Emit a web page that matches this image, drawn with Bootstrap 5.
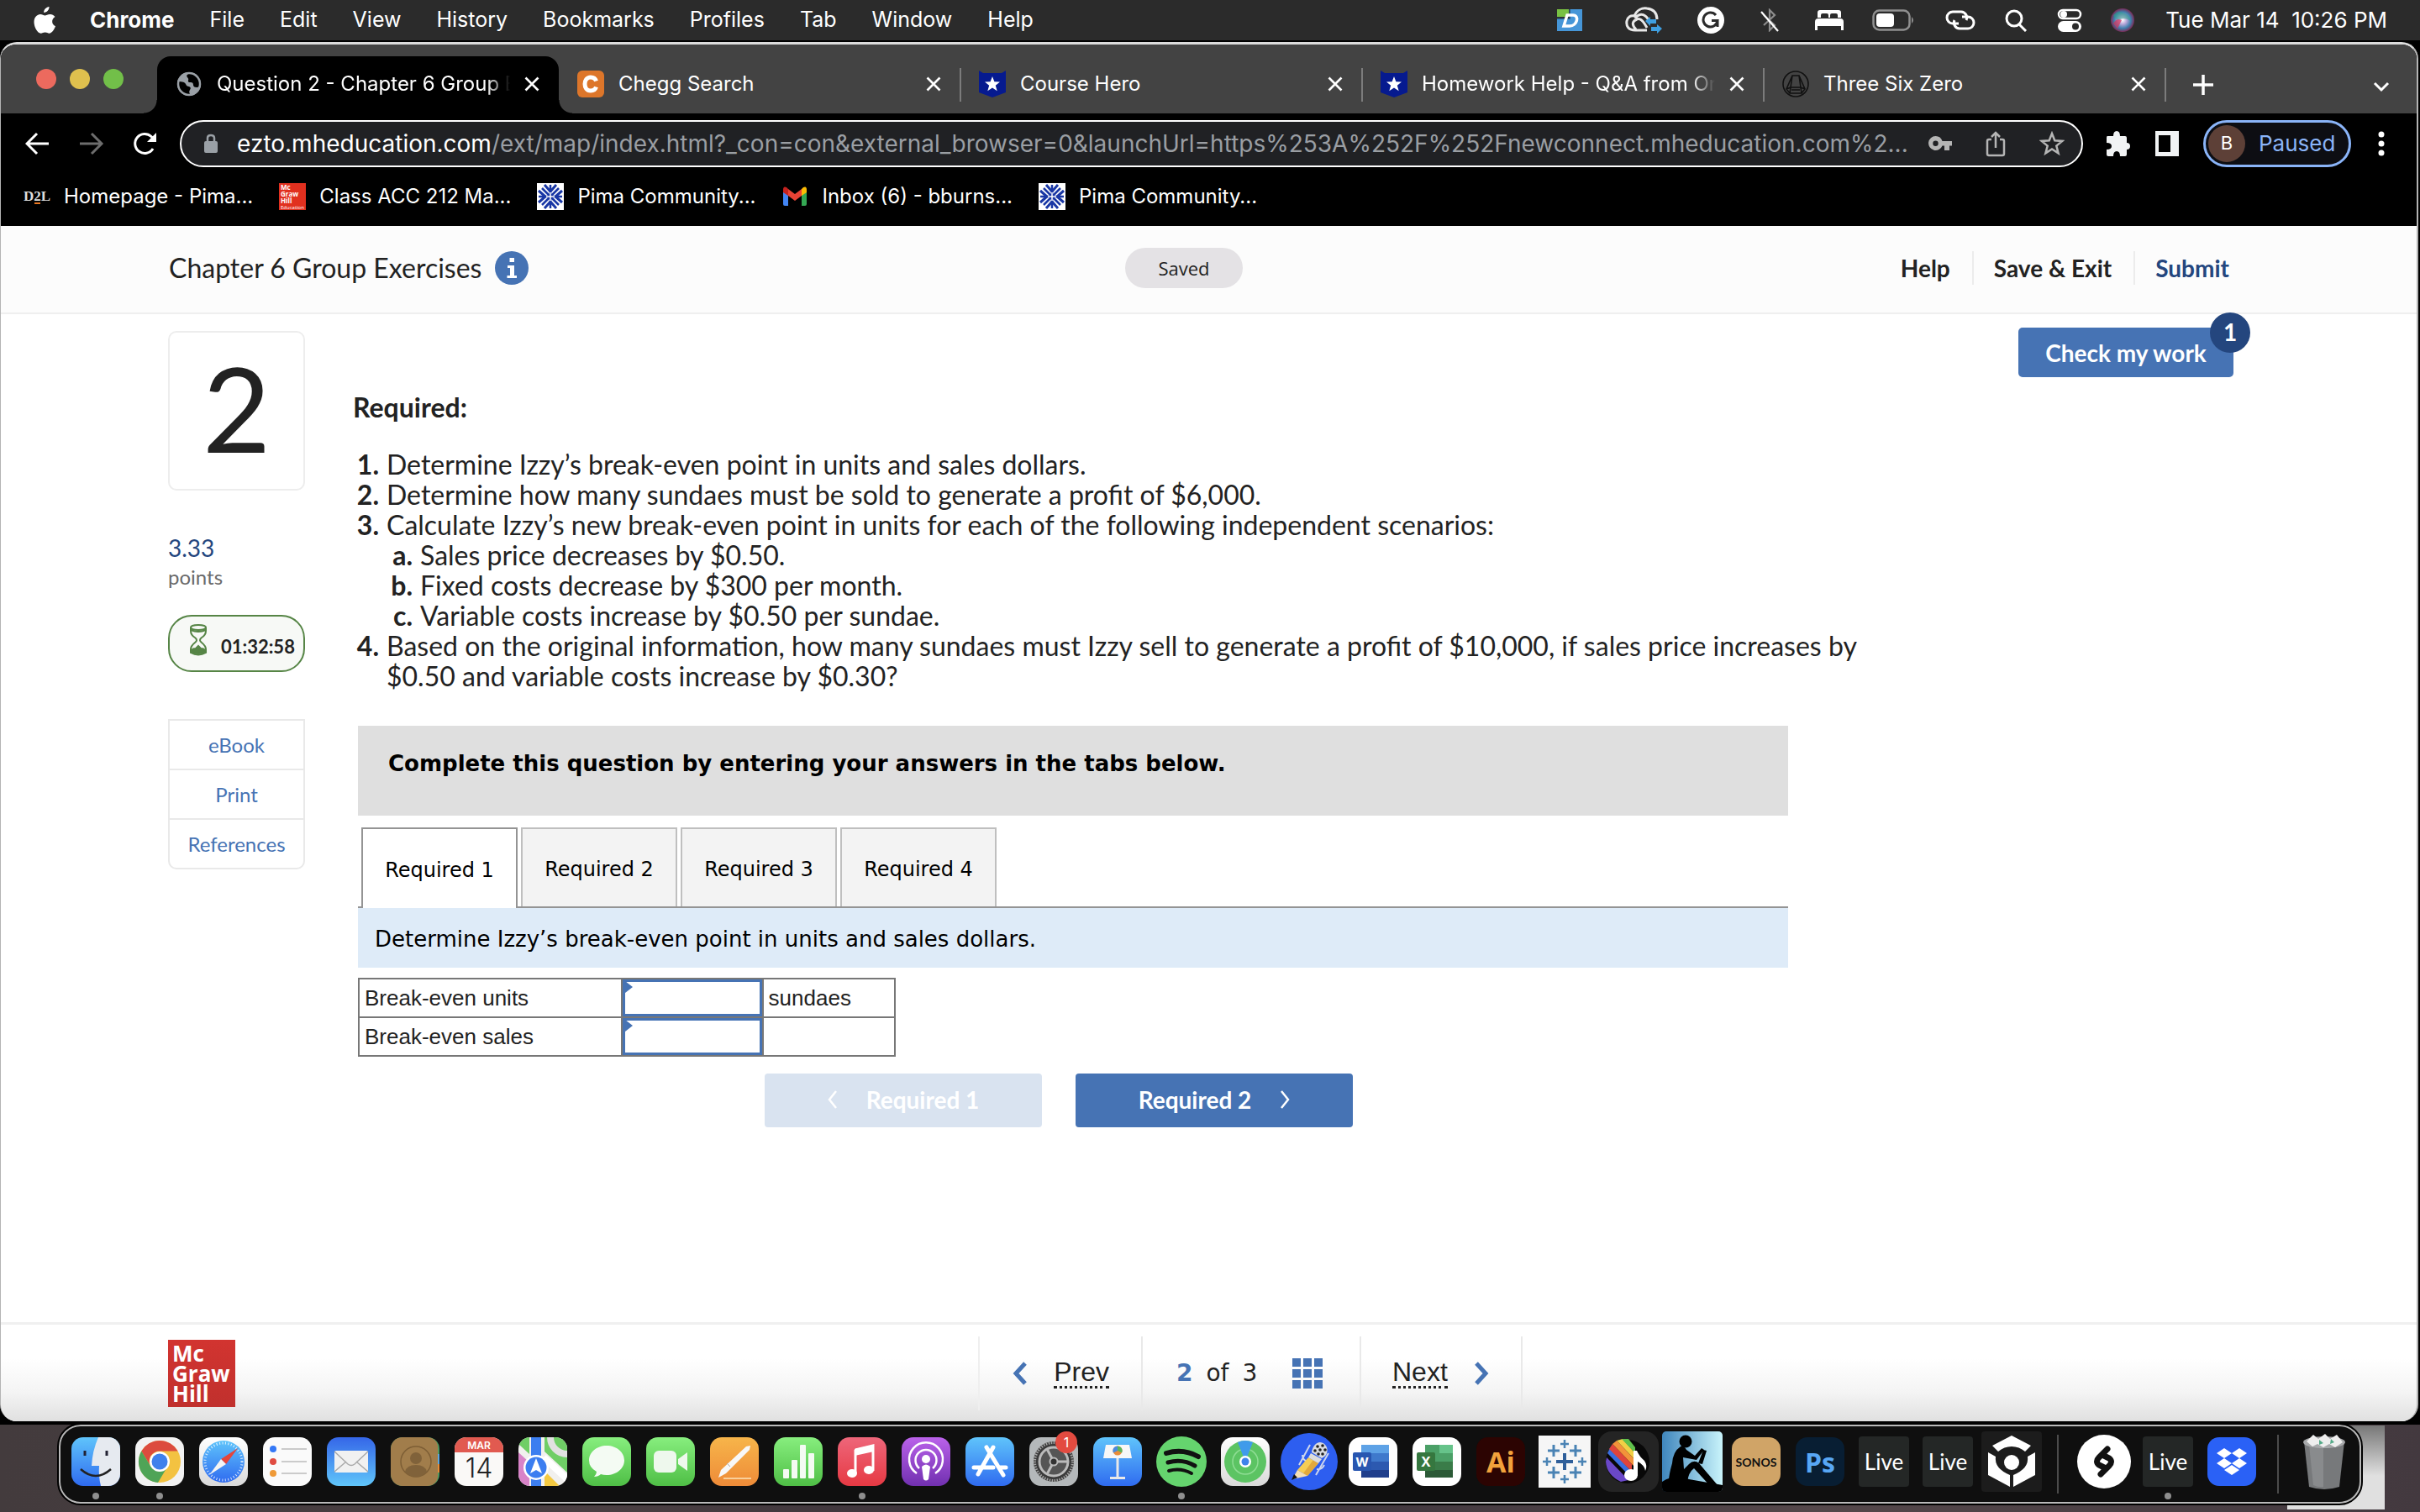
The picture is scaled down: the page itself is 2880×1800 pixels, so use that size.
<!DOCTYPE html>
<html lang="en">
<head>
<meta charset="utf-8">
<meta name="viewport" content="width=device-width, initial-scale=1">
<title>Question 2 - Chapter 6 Group Exercises</title>
<link href="https://cdn.jsdelivr.net/npm/bootstrap@5.3.0/dist/css/bootstrap.min.css" rel="stylesheet">
<script src="https://cdn.jsdelivr.net/npm/bootstrap@5.3.0/dist/js/bootstrap.bundle.min.js"></script>
<style>
:root{--ui:Inter,sans-serif;--text:Lato,sans-serif;--wide:"DejaVu Sans",sans-serif;--plain:"Liberation Sans",sans-serif;--mhblue:#4673b4;--navy:#24467e;--ink:#222}
body{background:#000;font-family:var(--ui);line-height:1.25;overflow:hidden;color:var(--ink)}
a{text-decoration:none;color:inherit}
button{border:0;background:none;padding:0;color:inherit}
svg{display:block;flex:none}
.desk{min-height:100vh;background:linear-gradient(90deg,#433b3d,#4a3f42 25%,#372f38 45%,#54474a 75%,#43393f)}
/* system menu bar */
.sysbar{height:48px;background:#2b2b2b;color:#fff;font-size:26px;padding:0 39px 0 40px}
.sysmenu{font-size:25px;gap:42px;margin-left:40px}
.sysmenu b{font-size:26px;font-weight:700}
.sysicons{margin-right:37px;gap:34px}
.clock{white-space:pre}
/* browser window */
.edge{background:#000;padding:2px 2px 4px 0}
.win{background:#000;border:2px solid #b4b4b4;border-top:3px solid #dcdcdc;border-left-width:1px;border-bottom:0;border-radius:20px;overflow:hidden}
.strip{height:82px;background:#434343;color:#fff;font-size:24px;padding-left:42px}
.lights{gap:16px;width:144px}
.lights button{width:24px;height:24px;border-radius:50%}
.wtab{width:478px;height:68px;padding:0 23px 2px 22px;position:relative;gap:17px}
.wtab .wt{flex:1;overflow:hidden;white-space:nowrap;min-width:0}
.fade-end{-webkit-mask-image:linear-gradient(90deg,#000 92%,transparent);mask-image:linear-gradient(90deg,#000 92%,transparent)}
.wtab+.wtab+.wtab::before,.plus::before{content:"";position:absolute;left:-1px;top:14px;width:2px;height:40px;background:#7c7c7c}
.wtab.on{background:#000;border-radius:16px 16px 0 0}
.wtab.on::before,.wtab.on::after{content:"";position:absolute;bottom:0;width:16px;height:16px}
.wtab.on::before{left:-16px;background:radial-gradient(circle at 0 0,#434343 15px,#000 16px)}
.wtab.on::after{right:-16px;background:radial-gradient(circle at 100% 0,#434343 15px,#000 16px)}
.plus{height:68px;width:89px;position:relative}
.tools{height:72px;padding:0 38px 0 29px;color:#fff}
.fwd{margin:0 34px 0 34px}
.omni{height:56px;border:2px solid #fff;border-radius:28px;background:#202124;font-size:28px;color:#9a9ea3;padding:0 20px 0 26px;margin:0 25px 0 26px;min-width:0}
.omni .url{white-space:nowrap;overflow:hidden;min-width:0;outline:0;margin-left:22px}
.omni .url b{font-weight:400;color:#fff}
.paused{height:56px;width:176px;border:3px solid #8ab4f8;border-radius:28px;background:#0d0e13;color:#8ab4f8;font-size:26px;padding-left:3px}
.avatar{width:44px;height:44px;border-radius:50%;background:#5d4037;color:#fff;font-size:22px;display:flex;align-items:center;justify-content:center}
.marks{height:62px;padding:0 27px 8px;gap:31px;color:#fff;font-size:24px}
.marks a{gap:16px}
/* exercise page */
.page{background:#fff;font-family:var(--text);font-size:32px}
.phead{height:105px;background:#fcfcfc;border-bottom:2px solid #efefef;padding:0 223px 4px 200px}
.phead>div{flex:1 1 0}
.saved{font:22px/48px "Open Sans",sans-serif;width:140px;border-radius:24px;background:#e4e2e5;text-align:center;margin-right:36px}
.pnav{font-size:28px;font-weight:700;line-height:40px}
.pnav a+a{border-left:2px solid #ececec;margin-left:26px;padding-left:24px}
.pmain{padding:20px 218px 0 199px}
.side{width:163px}
.qnum{height:190px;border:2px solid #ededed;border-radius:10px;font-size:140px;line-height:178px;text-align:center}
.pts{font-size:28px;line-height:36px;color:var(--navy);margin-top:50px}
.ptl{font-size:24px;line-height:34px;color:#6a6a6a}
.timer{height:68px;border:2px solid #568546;border-radius:28px;background:#f7f9f6;margin-top:28px;font-size:22px;font-weight:700;gap:15px;padding-left:22px}
.reflinks{border:2px solid #e9e9e9;border-radius:0 0 10px 10px;margin-top:56px;font-size:24px;color:var(--mhblue);text-align:center}
.reflinks a{display:block;line-height:57px}
.reflinks a+a{border-top:2px solid #e9e9e9}
.quest{margin-left:57px;padding-top:71px;width:1800px}
.quest h2{font-size:32px;font-weight:700;line-height:40px;margin-bottom:30px}
.quest ol{line-height:36px;margin:0 0 41px;padding-left:40px;list-style:none;counter-reset:n}
.quest ol ol{margin:0}
.quest li{counter-increment:n;position:relative}
.quest li::before{content:counter(n) ".";position:absolute;right:100%;margin-right:9px;font-weight:700;text-align:right}
.quest ol ol li::before{content:counter(n,lower-alpha) "."}
.work{margin-left:6px;width:1702px}
.banner{height:107px;background:#dfdfdf;color:#000;font:700 26px/90px var(--wide);padding-left:36px}
.qtabs{gap:4px;margin-top:14px;padding-left:4px;border-bottom:2px solid #949494;color:#000}
.qtabs button{width:186px;height:94px;border:2px solid #bfbfbf;border-bottom:0;background:#f3f3f3;font:24px var(--wide);padding-top:4px}
.qtabs button.on{background:#fff;border-color:#949494;margin-bottom:-2px;height:96px}
.prompt{height:71px;background:#deebf8;color:#000;font:26px/74px var(--wide);padding-left:20px}
.answers{margin-top:12px;border-collapse:collapse;font:26px/30px var(--plain);width:640px}
.answers th,.answers td{border:2px solid #777;height:46px;padding:0 6px;font-weight:400}
.answers td.cell{padding:0;width:168px;position:relative}
.answers input{display:block;width:100%;height:44px;border:3px solid var(--mhblue);border-radius:0;outline:0;padding:0 8px}
.answers td.cell::after{content:"";position:absolute;left:3px;top:2px;border-left:9px solid var(--mhblue);border-top:7px solid transparent;border-bottom:7px solid transparent}
.stepper{gap:40px;margin:20px 0 0 484px}
.stepper button{width:330px;height:64px;border-radius:4px;background:var(--mhblue);color:#fff;font-size:28px;font-weight:700;gap:34px;padding-bottom:2px}
.stepper button:disabled{background:#d9e3f0}
.check{background:var(--mhblue);color:#fff;border-radius:5px;width:256px;height:59px;font-size:28px;font-weight:700;position:relative;margin-top:-4px;line-height:54px}
.check span{position:absolute;right:-20px;top:-18px;width:48px;height:48px;border-radius:50%;background:var(--navy);line-height:46px;text-align:center}
.pfoot{height:118px;border-top:3px solid #f0f0f0;padding:0 100px 0 199px;background:linear-gradient(#fff 35%,#f4f4f4 70%,#e0e0e0)}
.pfoot>div{flex:1 1 0}
.mhlogo{width:80px;height:80px;background:linear-gradient(#d23430,#c0302d);color:#fff;font:700 26px/24px "Open Sans",sans-serif;padding:4px 0 0 5px}
.pager{font:32px/40px var(--plain);flex:none!important}
.pager>*{height:88px;border-right:2px solid #e9e9e9}
.pager>:first-child{border-left:2px solid #efefef;padding:0 38px;gap:30px}
.pager>:nth-child(2){font-family:var(--wide);font-size:28px;width:260px;padding-left:40px;gap:16px}
.pager>:nth-child(3){padding:0 37px;gap:30px}
.pager u{text-decoration:none;border-bottom:3px dotted #222;line-height:34px}
/* dock */
.shelf{height:104px;position:relative}
.peek{position:absolute;right:42px;top:1px;width:116px;height:100px;background:linear-gradient(#777,#e0e0e0 60%)}
.dock{position:relative;height:94px;border:2px solid #b9b9b9;border-radius:26px;background:#0f0f0f;padding:0 4px;outline:2px solid #000}
.dock>a{width:76px;height:90px;display:flex;align-items:center;justify-content:center;position:relative;padding-bottom:6px}
.dock>a.run::after{content:"";position:absolute;bottom:3px;left:34px;width:8px;height:8px;border-radius:50%;background:#8f8f8f}
.dock>i{width:2px;height:70px;background:#4b4b4b;margin:0 16px}
.tile{width:58px;height:58px;border-radius:14px;display:flex;align-items:center;justify-content:center;overflow:hidden}
.live{width:60px;height:60px;border-radius:4px;background:#242726;color:#fff;font:26px Lato,sans-serif}
.ai{background:#2c0402;color:#f2a23c;font:700 34px "Open Sans",sans-serif}
.ps{background:#081e33;color:#58a7f5;font:700 32px "Open Sans",sans-serif}
.sonos{background:#d0a467;color:#111;font:700 14px Lato,sans-serif}
.dropb{background:#2a61f6}
.count{position:absolute;right:10px;top:6px;width:26px;height:26px;border-radius:50%;background:#e34b40;color:#fff;font-size:16px;line-height:26px;text-align:center}
</style>
</head>
<body>
<svg width="0" height="0" class="position-absolute">
<defs>
<symbol id="x" viewBox="0 0 18 18"><path d="M1.500 1.500l15 15M16.500 1.500l-15 15" stroke="#fff" stroke-width="2.600"/></symbol>
<symbol id="hero" viewBox="0 0 32 32"><path d="M0 0l5 3h22l5-3v26L16 32 0 26z" fill="#061a8f"/><path d="M16 7l2.400 6.300 6.600.2-5.200 4.200 1.900 6.500L16 20.500l-5.700 3.700 1.900-6.500L7 13.500l6.600-.2z" fill="#fff"/></symbol>
<symbol id="pima" viewBox="0 0 32 32"><path d="M0 0h32v32H0z" fill="#fff"/><g fill="none" stroke="#1937a5"><path d="M16 2v28M2 16h28M6 6l20 20M26 6L6 26" stroke-width="2.500"/><path d="M9 2l7 8 7-8M9 30l7-8 7 8M2 9l8 7-8 7M30 9l-8 7 8 7" stroke-width="3"/></g><path d="M16 11v10M11 16h10" stroke="#fff" stroke-width="1.500"/></symbol>
<linearGradient id="gBlue" x2="0" y2="1"><stop stop-color="#5fc4fb"/><stop offset="1" stop-color="#2f6bf0"/></linearGradient>
<linearGradient id="gBlueR" x2="0" y2="1"><stop stop-color="#3566e8"/><stop offset="1" stop-color="#60c6fa"/></linearGradient>
<linearGradient id="gGreen" x2="0" y2="1"><stop stop-color="#87ee7e"/><stop offset="1" stop-color="#4fbf46"/></linearGradient>
<linearGradient id="gWhite" x2="0" y2="1"><stop stop-color="#fff"/><stop offset="1" stop-color="#d9d9d9"/></linearGradient>
<linearGradient id="gRed" x2="0" y2="1"><stop stop-color="#ee667a"/><stop offset="1" stop-color="#e63943"/></linearGradient>
<linearGradient id="gPurple" x2="0" y2="1"><stop stop-color="#ba62ea"/><stop offset="1" stop-color="#7130b0"/></linearGradient>
<linearGradient id="gOrange" x2="0" y2="1"><stop stop-color="#f7b54a"/><stop offset="1" stop-color="#ee8b38"/></linearGradient>
<linearGradient id="gSky" x2="1" y2="0"><stop stop-color="#3f86bd"/><stop offset="1" stop-color="#c9f4fb"/></linearGradient>
<radialGradient id="gSiri"><stop stop-color="#fff"/><stop offset=".35" stop-color="#b7a6d8"/><stop offset=".7" stop-color="#3f7fae"/><stop offset="1" stop-color="#7b2b57"/></radialGradient>
</defs>
</svg>

<div class="desk d-flex flex-column">
<header class="sysbar d-flex align-items-center">
  <svg width="27" height="32" viewBox="0 0 27 32" fill="#fff"><path d="M18.500 0c.3 3.500-2.800 7-6.300 6.900C11.900 3.500 15.200.300 18.500 0zM26 23.300c-1.600 4-4.300 8.300-7.300 8.400-2 0-2.700-1.200-5-1.200s-3.200 1.200-5.100 1.200C4.800 31.800.500 24.500.500 18.300c0-6 3.800-9.200 7.500-9.300 2.200 0 4.200 1.500 5.500 1.500s3.800-1.700 6.400-1.500c1.900.1 4.200 1 5.600 3-4.900 3-4.100 9.300.5 11.300z"/></svg>
  <nav class="sysmenu d-flex align-items-center"><a href="#"><b>Chrome</b></a><a href="#">File</a><a href="#">Edit</a><a href="#">View</a><a href="#">History</a><a href="#">Bookmarks</a><a href="#">Profiles</a><a href="#">Tab</a><a href="#">Window</a><a href="#">Help</a></nav>
  <div class="sysicons d-flex align-items-center ms-auto">
    <svg class="me-3" width="32" height="26" viewBox="0 0 32 26"><path d="M1 0h14v9H1z" fill="#79c143"/><path d="M16 0h15v26H1V11h15z" fill="#4696d8"/><path d="M1 11h15V0" fill="none" stroke="#2b4a66" stroke-width="1.500"/><path d="M13 7l-4 13h7c9 0 12-13 4-13z" fill="none" stroke="#fff" stroke-width="3.500"/></svg>
    <svg class="me-2" width="44" height="32" viewBox="0 0 44 32" fill="none" stroke="#e8e8e8" stroke-width="3"><path d="M26 28H12C4 28 1 23 2 17c1-5 5-7 9-6C14 4 20 1 26 2c8 1 12 6 12 13M13 27c-6-6-4-10 1-12 4-2 7 2 9 5l3 5M12 14c3-5 8-6 12-3 3 2 5 7 6 9"/><path d="M24 17l6-5v3h7v5h-7v3zM44 26l-6-5v3h-7v5h7v3z" fill="#3f9fe0" stroke="none"/></svg>
    <svg class="me-2" width="32" height="32" viewBox="0 0 32 32"><circle cx="16" cy="16" r="16" fill="#fff"/><path d="M22 10a8.500 8.500 0 1 0 2 6.500h-7M24 16.500V24" fill="none" stroke="#2b2b2b" stroke-width="3"/></svg>
    <svg class="me-2" width="24" height="28" viewBox="0 0 24 28" fill="none" stroke="#8d8d8d" stroke-width="2.200"><path d="M5 8l13 12-6 6V2l6 6L5 20"/><path d="M2 4l20 23" stroke="#fff"/></svg>
    <svg width="34" height="24" viewBox="0 0 34 24" fill="#fff"><path d="M3 9V3q0-3 3-3h22q3 0 3 3v6h-4V6q0-2-2-2h-5q-2 0-2 2v3h-2V6q0-2-2-2H9Q7 4 7 6v3zM0 24V14q0-4 4-4h26q4 0 4 4v10h-3v-5H3v5z"/></svg>
    <svg width="52" height="26" viewBox="0 0 52 26"><rect x="1.500" y="1.500" width="43" height="23" rx="7" fill="none" stroke="#909090" stroke-width="2.500"/><path d="M47 9q4 4 0 8z" fill="#909090"/><rect x="5" y="5" width="21" height="16" rx="4" fill="#fff"/></svg>
    <svg width="38" height="24" viewBox="0 0 38 24" fill="none" stroke="#fff" stroke-width="3"><path d="M17 16h-7a7 7 0 0 1 0-14h10a7 7 0 0 1 6 10M21 8h7a7 7 0 0 1 0 14H18a7 7 0 0 1-6-10"/></svg>
    <svg width="28" height="28" viewBox="0 0 28 28" fill="none" stroke="#fff" stroke-width="3"><circle cx="11" cy="12" r="9"/><path d="M17 19l8 8"/></svg>
    <svg width="30" height="28" viewBox="0 0 30 28"><rect x="2" y="2" width="26" height="10" rx="5" fill="none" stroke="#fff" stroke-width="2.500"/><circle cx="8" cy="7" r="4" fill="#fff"/><rect x="1" y="15" width="28" height="13" rx="6.500" fill="#fff"/><circle cx="22" cy="21.500" r="4" fill="#2b2b2b"/></svg>
    <svg width="28" height="28" viewBox="0 0 28 28"><circle cx="14" cy="14" r="14" fill="url(#gSiri)"/><path d="M3 8q6-6 11-3 8 2 10 10-8-5-13-2Q6 15 3 8" fill="#28a58a" opacity=".5"/><path d="M3 18q4-7 10-4-3 6-5 10z" fill="#d6335b" opacity=".7"/></svg>
  </div>
  <time class="clock">Tue Mar 14  10:26 PM</time>
</header>

<div class="edge flex-grow-1 d-flex flex-column">
<div class="win flex-grow-1 d-flex flex-column">
  <div class="strip d-flex align-items-end">
    <div class="lights d-flex align-self-center"><button style="background:#ec6a5e" aria-label="Close"></button><button style="background:#dfc04e" aria-label="Minimise"></button><button style="background:#72bf49" aria-label="Zoom"></button></div>
    <div class="wtab on d-flex align-items-center"><svg width="32" height="32" viewBox="0 0 32 32"><circle cx="16" cy="16" r="14" fill="#9aa0a6"/><path d="M3 13q8 0 9 3t4 3q3 1 1 4t1 6q-8 2-13-7-2-4-2-9zM15 4q-3 2-1 4t1 4 3 2q3 0 3 3t4 3 5-5Q30 6 19 3z" fill="#000"/><circle cx="16" cy="16" r="13" fill="none" stroke="#9aa0a6" stroke-width="2.500"/></svg><span class="wt fade-end">Question 2 - Chapter 6 Group Exercises</span><button aria-label="Close tab"><svg width="18" height="18"><use href="#x"/></svg></button></div>
    <div class="wtab d-flex align-items-center"><svg width="32" height="32" viewBox="0 0 32 32"><rect width="32" height="32" rx="6" fill="#dd762a"/><path d="M22.500 12.500Q21 8 16 8c-5 0-7 4-7 8s2 8 7 8q5 0 6.500-4.500" fill="none" stroke="#fff" stroke-width="5"/></svg><span class="wt">Chegg Search</span><button aria-label="Close tab"><svg width="18" height="18"><use href="#x"/></svg></button></div>
    <div class="wtab d-flex align-items-center"><svg width="32" height="32"><use href="#hero"/></svg><span class="wt">Course Hero</span><button aria-label="Close tab"><svg width="18" height="18"><use href="#x"/></svg></button></div>
    <div class="wtab d-flex align-items-center"><svg width="32" height="32"><use href="#hero"/></svg><span class="wt fade-end">Homework Help - Q&amp;A from Online Tutors</span><button aria-label="Close tab"><svg width="18" height="18"><use href="#x"/></svg></button></div>
    <div class="wtab d-flex align-items-center"><svg width="32" height="32" viewBox="0 0 32 32" fill="none" stroke="#111" stroke-width="1.600"><circle cx="16" cy="16" r="15"/><path d="M12 6h8l7 16-4 5H9l-4-5zM12 6l-2 14h12L20 6M5 22l5-2M27 22l-5-2M9 27l1-7M23 27l-1-7M11 23h10"/></svg><span class="wt">Three Six Zero</span><button aria-label="Close tab"><svg width="18" height="18"><use href="#x"/></svg></button></div>
    <button class="plus d-flex align-items-center justify-content-center" aria-label="New tab"><svg width="24" height="24"><path d="M12 0v24M0 12h24" stroke="#fff" stroke-width="3.500"/></svg></button>
    <button class="ms-auto me-4 pe-2 h-75 d-flex align-items-center" aria-label="Search tabs"><svg width="20" height="14"><path d="M2 2l8 8 8-8" fill="none" stroke="#fff" stroke-width="3"/></svg></button>
  </div>
  <div class="tools d-flex align-items-center">
    <button aria-label="Back"><svg width="28" height="28" fill="none" stroke="#fff" stroke-width="3"><path d="M14 2L2 14l12 12M2 14h26"/></svg></button>
    <button class="fwd" aria-label="Forward"><svg width="32" height="28" fill="none" stroke="#6d6d6d" stroke-width="3"><path d="M17 2l12 12-12 12M29 14H3"/></svg></button>
    <button aria-label="Reload"><svg width="30" height="28" fill="none" stroke="#fff" stroke-width="3"><path d="M24 20A11.500 11.500 0 1 1 22 5.500l4 4"/><path d="M28 1v11H17z" fill="#fff" stroke="none"/></svg></button>
    <div class="omni flex-grow-1 d-flex align-items-center">
      <svg width="18" height="24" viewBox="0 0 18 24"><rect x="1" y="9" width="16" height="14" rx="2" fill="#9aa0a6"/><path d="M5 10V5q0-3 4-3t4 3v5" fill="none" stroke="#9aa0a6" stroke-width="2.500"/></svg>
      <div class="url flex-grow-1" role="textbox" aria-label="Address" contenteditable="true" spellcheck="false"><b>ezto.mheducation.com</b>/ext/map/index.html?_con=con&amp;external_browser=0&amp;launchUrl=https%253A%252F%252Fnewconnect.mheducation.com%2...</div>
      <svg width="28" height="20" viewBox="0 0 28 20" fill="#b5b5b5"><path d="M8.500 1a8.500 8.500 0 1 0 8 11.500H19V18h6v-5.500h3V7H16.500A8.500 8.500 0 0 0 8.500 1zm0 5.500a3.200 3.200 0 1 1 0 6.400 3.200 3.200 0 0 1 0-6.400z" fill-rule="evenodd"/></svg>
      <svg class="mx-4 ps-3" width="40" height="32" viewBox="0 0 24 32" fill="none" stroke="#b5b5b5" stroke-width="2.500"><path d="M7 11H4q-2 0-2 2v15q0 2 2 2h16q2 0 2-2V13q0-2-2-2h-3M12 21V3M7 8l5-5 5 5"/></svg>
      <svg class="ms-3" width="30" height="30" viewBox="0 0 30 30" fill="none" stroke="#b5b5b5" stroke-width="2.500"><path d="M15 3l3.300 8.300 9 .6-7 5.700 2.300 8.800L15 21.500l-7.600 4.900 2.300-8.800-7-5.700 9-.6z"/></svg>
    </div>
    <svg width="32" height="32" viewBox="0 0 32 32" fill="#f1f3f4"><path d="M4 7h7q0-6 4-6t4 6h6q2 0 2 2v6q4 0 4 4t-4 4v6q0 2-2 2h-6q0-6-4-6t-4 6H5q-2 0-2-2v-6q6 0 6-4t-6-4V9q0-2 1-2z"/></svg>
    <svg class="mx-4 px-1" width="38" height="32" viewBox="0 0 30 32"><path d="M1 1h28v30H1zM5 6v20h14V6z" fill="#f1f3f4" fill-rule="evenodd"/></svg>
    <button class="paused d-flex align-items-center"><span class="avatar">B</span><span class="ps-3">Paused</span></button>
    <button class="ms-4 ps-2" aria-label="Menu"><svg width="8" height="30" fill="#fff"><circle cx="4" cy="4" r="3.500"/><circle cx="4" cy="15" r="3.500"/><circle cx="4" cy="26" r="3.500"/></svg></button>
  </div>
  <nav class="marks d-flex align-items-center">
    <a href="#" class="d-flex align-items-center"><svg width="32" height="32" viewBox="0 0 32 32"><text x="0" y="21" font-family="Liberation Serif,serif" font-weight="700" font-size="17" fill="#ddd">D2L</text><path d="M13 23h7v2h-7z" fill="#e87722"/></svg>Homepage - Pima...</a>
    <a href="#" class="d-flex align-items-center"><svg width="32" height="32" viewBox="0 0 32 32"><path d="M0 0h32v32H0z" fill="#e1301f"/><g fill="#fff" font-family="Open Sans,sans-serif" font-weight="700" font-size="8"><text x="2" y="8">Mc</text><text x="2" y="16">Graw</text><text x="2" y="24">Hill</text><text x="2" y="31" font-size="6" font-weight="400">Education</text></g></svg>Class ACC 212 Ma...</a>
    <a href="#" class="d-flex align-items-center"><svg width="32" height="32"><use href="#pima"/></svg>Pima Community...</a>
    <a href="#" class="d-flex align-items-center"><svg width="32" height="32" viewBox="0 0 32 32"><path d="M2 8v17q0 2 2 2h4V13z" fill="#4285f4"/><path d="M30 8v17q0 2-2 2h-4V13z" fill="#34a853"/><path d="M24 7v8l6-4V8q0-5-4-3z" fill="#fbbc04"/><path d="M2 8v3l6 4V7L6 5Q2 3 2 8z" fill="#c5221f"/><path d="M8 7l8 6 8-6v8l-8 6-8-6z" fill="#ea4335"/></svg>Inbox (6) - bburns...</a>
    <a href="#" class="d-flex align-items-center"><svg width="32" height="32"><use href="#pima"/></svg>Pima Community...</a>
  </nav>

  <div class="page flex-grow-1 d-flex flex-column">
    <header class="phead d-flex align-items-center">
      <div class="d-flex align-items-center gap-3">Chapter 6 Group Exercises<svg width="40" height="40" viewBox="0 0 40 40"><circle cx="20" cy="20" r="20" fill="#4673b4"/><path d="M17.500 8h5.500v5h-5.500zM15 17h8v12h3v3H14.500v-3H18v-9h-3z" fill="#fff"/></svg></div>
      <span class="saved">Saved</span>
      <div class="pnav d-flex justify-content-end"><a href="#">Help</a><a href="#">Save &amp; Exit</a><a href="#" style="color:var(--navy)">Submit</a></div>
    </header>
    <main class="pmain d-flex flex-grow-1 align-items-start">
      <aside class="side">
        <div class="qnum">2</div>
        <div class="pts">3.33</div><div class="ptl">points</div>
        <div class="timer d-flex align-items-center"><svg class="mb-2" width="24" height="38" viewBox="0 0 24 38" fill="none" stroke="#568546" stroke-width="2"><ellipse cx="12" cy="4" rx="9" ry="3"/><path d="M3 4v4q0 5 5 8 4 3 0 6-5 4-5 8v4q9 5 18 0v-4q0-4-5-8-4-3 0-6 5-3 5-8V4M3 7q9 4 18 0"/><path d="M3 33q1-4 6-4l3-3 3 3q5 0 6 4-9 4-18 0" fill="#568546"/></svg><span class="pt-2">01:32:58</span></div>
        <nav class="reflinks"><a href="#">eBook</a><a href="#">Print</a><a href="#">References</a></nav>
      </aside>
      <section class="quest">
        <h2>Required:</h2>
        <ol>
          <li>Determine Izzy’s break-even point in units and sales dollars.</li>
          <li>Determine how many sundaes must be sold to generate a profit of $6,000.</li>
          <li>Calculate Izzy’s new break-even point in units for each of the following independent scenarios:
            <ol><li>Sales price decreases by $0.50.</li><li>Fixed costs decrease by $300 per month.</li><li>Variable costs increase by $0.50 per sundae.</li></ol></li>
          <li>Based on the original information, how many sundaes must Izzy sell to generate a profit of $10,000, if sales price increases by $0.50 and variable costs increase by $0.30?</li>
        </ol>
        <div class="work">
          <div class="banner">Complete this question by entering your answers in the tabs below.</div>
          <div class="qtabs d-flex" role="tablist"><button class="on" role="tab">Required 1</button><button role="tab">Required 2</button><button role="tab">Required 3</button><button role="tab">Required 4</button></div>
          <div class="prompt">Determine Izzy’s break-even point in units and sales dollars.</div>
          <table class="answers">
            <tr><th scope="row" style="width:49%"><label for="u">Break-even units</label></th><td class="cell"><input id="u" type="text"></td><td>sundaes</td></tr>
            <tr><th scope="row"><label for="s">Break-even sales</label></th><td class="cell"><input id="s" type="text"></td><td></td></tr>
          </table>
          <div class="stepper d-flex">
            <button disabled class="d-flex align-items-center justify-content-center"><svg width="12" height="22"><path d="M10 1L2 11l8 10" fill="none" stroke="#fff" stroke-width="2.500"/></svg>Required 1</button>
            <button class="d-flex align-items-center justify-content-center">Required 2<svg width="12" height="22"><path d="M2 1l8 10-8 10" fill="none" stroke="#fff" stroke-width="2.500"/></svg></button>
          </div>
        </div>
      </section>
      <button class="check ms-auto">Check my work<span>1</span></button>
    </main>
    <footer class="pfoot d-flex align-items-center">
      <div><div class="mhlogo">Mc<br>Graw<br>Hill</div></div>
      <div class="pager d-flex">
        <a href="#" class="d-flex align-items-center"><svg width="20" height="28"><path d="M16 2L5 14l11 12" fill="none" stroke="#4673b4" stroke-width="5"/></svg><u>Prev</u></a>
        <div class="d-flex align-items-center"><b style="color:var(--mhblue)">2</b><span>of</span><span>3</span><svg class="ms-4" width="40" height="36" viewBox="0 0 36 36" fill="#4673b4"><path d="M0 0h10v10H0zM13 0h10v10H13zM26 0h10v10H26zM0 13h10v10H0zM13 13h10v10H13zM26 13h10v10H26zM0 26h10v10H0zM13 26h10v10H13zM26 26h10v10H26z"/></svg></div>
        <a href="#" class="d-flex align-items-center"><u>Next</u><svg width="20" height="28"><path d="M4 2l11 12L4 26" fill="none" stroke="#4673b4" stroke-width="5"/></svg></a>
      </div>
      <div></div>
    </footer>
  </div>
</div>
</div>

<div class="shelf d-flex justify-content-center align-items-start">
<div class="peek"></div>
<nav class="dock d-flex align-items-center">
<a href="#" class="run"><span class="tile"><svg width="58" height="58" viewBox="0 0 58 58"><path d="M0 0h58v58H0z" fill="url(#gBlue)"/><path d="M32 0q-7 16-8 34h9q-1 12 2 24h23V0z" fill="#e6eaf0"/><path d="M16 16v6M42 16v6" stroke="#223" stroke-width="3"/><path d="M11 38q18 16 36 0" fill="none" stroke="#222" stroke-width="2.500"/></svg></span></a>
<a href="#" class="run"><span class="tile"><svg width="58" height="58" viewBox="0 0 58 58"><path d="M0 0h58v58H0z" fill="#f2f2f2"/><circle cx="29" cy="29" r="25" fill="#f3c241"/><path d="M7.300 16.500A25 25 0 0 1 50.700 16.500H29A12 12 0 0 0 18 34z" fill="#dc4b3e"/><path d="M7.300 16.500A25 25 0 0 0 27 54l11-18.500A12 12 0 0 1 18.600 35z" fill="#4fa457"/><circle cx="29" cy="29" r="12" fill="#fff"/><circle cx="29" cy="29" r="9.500" fill="#4081ec"/></svg></span></a>
<a href="#"><span class="tile"><svg width="58" height="58" viewBox="0 0 58 58"><path d="M0 0h58v58H0z" fill="url(#gWhite)"/><circle cx="29" cy="29" r="25" fill="url(#gBlue)"/><circle cx="29" cy="29" r="22" fill="none" stroke="#fff" stroke-width="3" stroke-dasharray="1 2.500" opacity=".8"/><path d="M46 13L32 32l-6-6z" fill="#e5443b"/><path d="M12 45l14-19 6 6z" fill="#f4f4f4"/></svg></span></a>
<a href="#"><span class="tile"><svg width="58" height="58" viewBox="0 0 58 58"><path d="M0 0h58v58H0z" fill="#fafafa"/><path d="M22 14h30M22 29h30M22 43h30" stroke="#bcbcbc" stroke-width="1.500"/><circle cx="12" cy="14" r="4" fill="#3478f6"/><circle cx="12" cy="29" r="4" fill="#e04c42"/><circle cx="12" cy="43" r="4" fill="#ef9a38"/></svg></span></a>
<a href="#"><span class="tile"><svg width="58" height="58" viewBox="0 0 58 58"><path d="M0 0h58v58H0z" fill="url(#gBlueR)"/><rect x="9" y="16" width="40" height="26" rx="2" fill="#f1f1f1"/><path d="M9 17l16 15q4 3 8 0l16-15M9 41l14-12M49 41L35 29" fill="none" stroke="#a9a9a9" stroke-width="1.500"/></svg></span></a>
<a href="#"><span class="tile"><svg width="58" height="58" viewBox="0 0 58 58"><path d="M0 0h58v58H0z" fill="#4e9b62"/><path d="M50 20h8v12h-8z" fill="#5ba7e0"/><path d="M50 32h8v10h-8z" fill="#e88c37"/><rect width="56" height="58" rx="12" fill="#a17d4b"/><g fill="none" stroke="#7d5e35" stroke-width="1.500"><circle cx="30" cy="29" r="18"/></g><circle cx="30" cy="25" r="7" fill="#80623a"/><path d="M17 41q2-8 13-8t13 8q-5 6-13 6t-13-6" fill="#80623a"/></svg></span></a>
<a href="#"><span class="tile"><svg width="58" height="58" viewBox="0 0 58 58"><path d="M0 0h58v58H0z" fill="#faf9f7"/><path d="M0 0h58v18H0z" fill="#e15a50"/><text x="29" y="14" text-anchor="middle" font-family="Inter,sans-serif" font-weight="600" font-size="12" fill="#fff">MAR</text><text x="29" y="48" text-anchor="middle" font-family="Inter,sans-serif" font-weight="300" font-size="32" fill="#222">14</text></svg></span></a>
<a href="#"><span class="tile"><svg width="58" height="58" viewBox="0 0 58 58"><path d="M0 0h58v58H0z" fill="#f1f0ee"/><path d="M0 0h13v20L0 8z" fill="#6fce66"/><path d="M31 0h27v42L31 17z" fill="#6fce66"/><circle cx="58" cy="0" r="20" fill="none" stroke="#e1e1e1" stroke-width="8"/><path d="M0 18l13 12v28H0z" fill="#d883c8"/><path d="M31 58V40l18 18z" fill="#f4c942"/><path d="M58 50L30 24" stroke="#fff" stroke-width="8"/><path d="M15 0h12v58H15z" fill="#3c7ef0"/><circle cx="21" cy="36" r="15" fill="#fff"/><circle cx="21" cy="36" r="12.500" fill="#3c7ef0"/><path d="M21 25l7 18-7-4-7 4z" fill="#fff"/></svg></span></a>
<a href="#"><span class="tile"><svg width="58" height="58" viewBox="0 0 58 58"><path d="M0 0h58v58H0z" fill="url(#gGreen)"/><path d="M29 10c12 0 21 8 21 17.500S41 45 29 45q-4 0-7-1-3 3-8 3 3-3 3-6-9-5-9-13.500C8 18 17 10 29 10z" fill="#f4fbf3"/></svg></span></a>
<a href="#"><span class="tile"><svg width="58" height="58" viewBox="0 0 58 58"><path d="M0 0h58v58H0z" fill="url(#gGreen)"/><rect x="9" y="16" width="27" height="26" rx="6" fill="#eef8ed"/><path d="M38 26l11-8v22l-11-8z" fill="#eef8ed"/></svg></span></a>
<a href="#"><span class="tile"><svg width="58" height="58" viewBox="0 0 58 58"><path d="M0 0h58v58H0z" fill="url(#gOrange)"/><path d="M16 49h33" stroke="#f9cf9a" stroke-width="2"/><path d="M10 48l3-9L43 11l5-1-1 5-28 28z" fill="#f8f8f8"/><path d="M24 35l-4-4" stroke="#aaa"/></svg></span></a>
<a href="#"><span class="tile"><svg width="58" height="58" viewBox="0 0 58 58"><path d="M0 0h58v58H0z" fill="url(#gGreen)"/><g fill="#f4fbf3"><rect x="11" y="38" width="7" height="11" rx="1"/><rect x="21" y="27" width="7" height="22" rx="1"/><rect x="31" y="9" width="7" height="40" rx="1"/><rect x="41" y="19" width="7" height="30" rx="1"/></g></svg></span></a>
<a href="#" class="run"><span class="tile"><svg width="58" height="58" viewBox="0 0 58 58"><path d="M0 0h58v58H0z" fill="url(#gRed)"/><path d="M21 15l21-5v30M21 15v28" fill="none" stroke="#fff" stroke-width="3"/><path d="M20 14l23-5v8l-23 5z" fill="#fff"/><ellipse cx="17" cy="43" rx="6" ry="5" fill="#fff"/><ellipse cx="37" cy="39" rx="6" ry="5" fill="#fff"/></svg></span></a>
<a href="#"><span class="tile"><svg width="58" height="58" viewBox="0 0 58 58"><path d="M0 0h58v58H0z" fill="url(#gPurple)"/><g fill="none" stroke="#fff" stroke-width="2.500"><path d="M18 43a20 20 0 1 1 22 0M21 37a12.500 12.500 0 1 1 16 0"/></g><circle cx="29" cy="26" r="5" fill="#fff"/><path d="M24 35q5-5 10 0l-2 15q-3 3-6 0z" fill="#fff"/></svg></span></a>
<a href="#"><span class="tile"><svg width="58" height="58" viewBox="0 0 58 58"><path d="M0 0h58v58H0z" fill="url(#gBlue)"/><path d="M25 12l20 33M33 12L15 44M10 36h23M40 36h8" stroke="#fff" stroke-width="5" stroke-linecap="round"/></svg></span></a>
<a href="#"><span class="tile"><svg width="58" height="58" viewBox="0 0 58 58"><path d="M0 0h58v58H0z" fill="#b4b8ba"/><circle cx="29" cy="29" r="24" fill="#3a3a3a"/><circle cx="29" cy="29" r="22.500" fill="none" stroke="#a5a5a5" stroke-width="3" stroke-dasharray="1.500 1.500"/><circle cx="29" cy="29" r="17" fill="#555" stroke="#bbb" stroke-width="3"/><path d="M29 29h17M29 29l-8-15M29 29l-8 15" stroke="#bbb" stroke-width="3"/><circle cx="29" cy="29" r="4.500" fill="#333" stroke="#bbb" stroke-width="2"/></svg></span><span class="count">1</span></a>
<a href="#"><span class="tile"><svg width="58" height="58" viewBox="0 0 58 58"><path d="M0 0h58v58H0z" fill="url(#gBlue)"/><path d="M27.500 25h3v22h-3zM20 47h18v3H20z" fill="#e8e8e8"/><path d="M15 9h28l3 16H12z" fill="#f7f7f7"/><circle cx="29" cy="16" r="5.500" fill="#e98c3a"/><path d="M29 16v-5.500a5.500 5.500 0 0 1 5 8z" fill="#5ab35c"/><path d="M29 16v-5.500a5.500 5.500 0 0 0-5 8z" fill="#4a8be0"/></svg></span></a>
<a href="#" class="run"><svg width="60" height="60" viewBox="0 0 60 60"><circle cx="30" cy="30" r="30" fill="#65d46e"/><g fill="none" stroke="#111" stroke-linecap="round"><path d="M12 20q20-6 38 4" stroke-width="6"/><path d="M14 31q17-5 32 4" stroke-width="5"/><path d="M15 41q14-4 27 3" stroke-width="4"/></g></svg></a>
<a href="#"><span class="tile"><svg width="58" height="58" viewBox="0 0 58 58"><path d="M0 0h58v58H0z" fill="url(#gWhite)"/><circle cx="29" cy="29" r="25" fill="#5cc463"/><circle cx="29" cy="29" r="15" fill="none" stroke="#8fdd94" stroke-width="1.500"/><path d="M29 29L20 6q9-4 18 0z" fill="#3f9bea"/><circle cx="29" cy="29" r="7" fill="#fff"/><circle cx="29" cy="29" r="4.500" fill="#3f83ea"/></svg></span></a>
<a href="#"><svg width="68" height="68" viewBox="0 0 68 68"><circle cx="34" cy="34" r="34" fill="#2d5ef0"/><path d="M35 14L22 38M57 24L42 50M26 26q0 6 6 8M52 38q-3 6-9 5" fill="none" stroke="#ccd5ee" stroke-width="2"/><path d="M33 29l12 7-13 15-12-7z" fill="#f6cd54"/><path d="M39 32l6 4-13 15-5-3z" fill="#e2a93c"/><path d="M20 44l12 7-18 4z" fill="#f5dfb5"/><path d="M13 56l3-7 4 4z" fill="#111"/><path d="M33 29l3-5 13 7-4 5z" fill="#ddd"/><path d="M37 23c1-7 5-12 10-12 7 1 10 7 8 13-1 3-3 4-6 6z" fill="#d9dbe0"/><g fill="#222"><circle cx="44" cy="16" r="1.800"/><circle cx="50" cy="15" r="1.800"/><circle cx="47" cy="20" r="1.800"/><circle cx="41" cy="21" r="1.800"/><circle cx="53" cy="20" r="1.800"/><circle cx="50" cy="25" r="1.800"/><circle cx="45" cy="25" r="1.800"/></g></svg></a>
<a href="#"><span class="tile"><svg width="58" height="58" viewBox="0 0 58 58"><path d="M0 0h58v58H0z" fill="#fff"/><path d="M15 9h33v10H15z" fill="#5ea2e6"/><path d="M15 19h33v10H15z" fill="#3f79cc"/><path d="M15 29h33v10H15z" fill="#2c59b0"/><path d="M15 39h33v9H15z" fill="#203f8c"/><rect x="5" y="18" width="22" height="22" rx="2" fill="#2856b0"/><text x="16" y="35" text-anchor="middle" font-family="Inter,sans-serif" font-weight="700" font-size="15" fill="#fff">W</text></svg></span></a>
<a href="#"><span class="tile"><svg width="58" height="58" viewBox="0 0 58 58"><path d="M0 0h58v58H0z" fill="#fff"/><path d="M15 9h17v10H15z" fill="#4ba067"/><path d="M32 9h16v10H32z" fill="#66c38a"/><path d="M15 19h33v10H15z" fill="#4ba067"/><path d="M15 29h33v10H15z" fill="#3a7c49"/><path d="M15 39h33v9H15z" fill="#2c5a37"/><rect x="5" y="18" width="22" height="22" rx="2" fill="#35773f"/><text x="16" y="35" text-anchor="middle" font-family="Inter,sans-serif" font-weight="700" font-size="16" fill="#fff">X</text></svg></span></a>
<a href="#"><span class="tile ai">Ai</span></a>
<a href="#"><svg width="62" height="62" viewBox="0 0 62 62" fill="none" stroke="#4a83b4"><path d="M0 0h62v62H0z" fill="#f6f6f6" stroke="none"/><path d="M31 21v20M21 31h20" stroke="#2f5f9a" stroke-width="4"/><path d="M18 11v14M11 18h14M44 11v14M37 18h14M18 37v14M11 44h14M44 37v14M37 44h14" stroke-width="3"/><path d="M31 5v10M26 10h10M31 47v10M26 52h10M10 26v10M5 31h10M52 26v10M47 31h10" stroke-width="2.500"/></svg></a>
<a href="#"><svg width="72" height="72" viewBox="0 0 72 72"><rect width="72" height="72" rx="16" fill="#242424"/><circle cx="35" cy="36" r="26" fill="#080808"/><path d="M10 31l26 27-9 2Q10 52 9 36z" fill="#6a48c8"/><path d="M11 26l27 28v-8L14 20z" fill="#3a6ee0"/><path d="M13 21l27 27v-9L17 15z" fill="#e0443b"/><path d="M17 15l25 26v-9L22 11z" fill="#f3923a"/><path d="M22 11l21 22v-8L29 9z" fill="#f2cf45"/><path d="M28 9l16 17v-7L36 9z" fill="#5fc04c"/><ellipse cx="39" cy="52" rx="8" ry="7" fill="#fff"/><path d="M42 51V23h4q3 7 9 12 4 6 1 12-1-7-9-11v17z" fill="#fff"/></svg></a>
<a href="#"><svg width="72" height="72" viewBox="0 0 72 72"><rect width="72" height="72" rx="5" fill="url(#gSky)"/><path d="M0 60q16-10 32-3l40 7v3q0 5-5 5H5q-5 0-5-5z" fill="#000"/><circle cx="28" cy="12" r="7.500" fill="#000"/><path d="M22 18q-9 6-10 20-4 14-4 21l22 2q1-12 8-17l20 22 8-2-22-26q-6-5-12 1l-6 6-1-14 16 3 9-12-3-2-8 9-10-7q-3-5-7-4z" fill="#000"/><path d="M43 38l6-16 4 1-5 16z" fill="#000"/></svg></a>
<a href="#"><span class="tile sonos">SONOS</span></a>
<a href="#"><span class="tile ps">Ps</span></a>
<a href="#"><span class="tile live">Live</span></a>
<a href="#"><span class="tile live">Live</span></a>
<a href="#"><svg width="72" height="72" viewBox="0 0 72 72"><rect width="72" height="72" rx="4" fill="#1c1c1c"/><g fill="#fff"><path d="M36 5l23 12-7 7q-7-6-16-6t-16 6l-7-7z"/><path d="M8 25l9 5q-2 14 17 22v14L8 52zM64 25l-9 5q2 14-17 22v14l26-14z"/><circle cx="36" cy="37" r="9"/></g></svg></a>
<i></i>
<a href="#"><svg width="64" height="64" viewBox="0 0 64 64"><circle cx="32" cy="32" r="32" fill="#fff"/><path d="M36 17l-10 10q-5 5 0 9l6 3M28 47l10-10q5-5 0-9l-6-3" fill="none" stroke="#111" stroke-width="7" stroke-linecap="round"/></svg></a>
<a href="#" class="run"><span class="tile live">Live</span></a>
<a href="#"><span class="tile dropb"><svg width="36" height="32" viewBox="0 0 36 32" fill="#fff"><path d="M9 0l9 6-9 6-9-6zM27 0l9 6-9 6-9-6zM9 12l9 6-9 6-9-6zM27 12l9 6-9 6-9-6zM18 20l9 6-9 6-9-6z"/></svg></span></a>
<i></i>
<a href="#"><svg width="52" height="68" viewBox="0 0 52 68"><path d="M2 10h48l-6 54q-18 6-36 0z" fill="#77797b"/><path d="M8 14l5 48q7 3 12 2V16z" fill="#96989a" opacity=".6"/><ellipse cx="26" cy="11" rx="25" ry="7" fill="#a6a8aa"/><path d="M5 10l8-8 6 5 8-6 6 6 8-5 7 9-9 6-7-4-7 4-7-4-6 3z" fill="#eee"/><path d="M20 8l5 4-5 2zM34 7l4 4-5 2z" fill="#5a8"/></svg></a>
</nav>
</div>
</div>
</body>
</html>
